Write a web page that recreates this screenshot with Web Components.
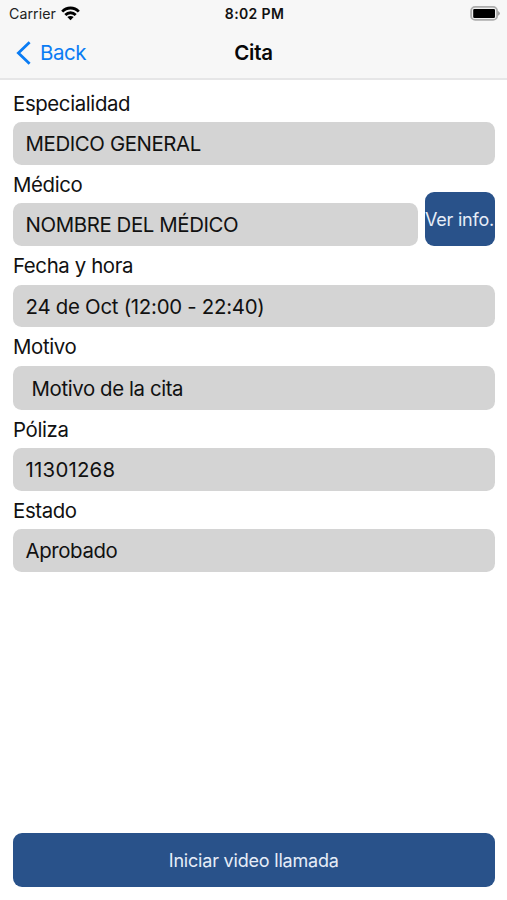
<!DOCTYPE html>
<html lang="es">
<head>
<meta charset="utf-8">
<title>Cita</title>
<style>
html, body { margin: 0; height: 100%; background: #fff; }
body { font-family: Inter, "Liberation Sans", sans-serif; color: #111; overflow: hidden; }
</style>
</head>
<body>
<cita-screen></cita-screen>
<script>
const define = (name, html) => customElements.define(name, class extends HTMLElement {
  constructor() {
    super();
    this.attachShadow({ mode: 'open' }).innerHTML = html;
  }
});

define('status-bar', `
<style>
:host { display: grid; grid-template-columns: 1fr auto 1fr; align-items: center; height: 27px; padding: 0 7px 0 9px; font-size: 14.2px; color: #222; }
.left { display: flex; align-items: center; gap: 5px; letter-spacing: 0.05px; }
.time { font-weight: 600; font-size: 14px; letter-spacing: 0.35px; color: #111; }
.right { display: flex; justify-content: flex-end; }
svg { display: block; }
</style>
<div class="left"><span>Carrier</span>
<svg width="19" height="15" viewBox="0 0 19 15" fill="none" stroke="#000" stroke-width="2.8"><path d="M1.2 5.6C5.8 .8 13.2 .8 17.8 5.6"/><path d="M4.3 9C7.3 6 11.7 6 14.7 9"/><path d="M9.5 14.2L6.3 11C8.2 9.6 10.8 9.6 12.7 11Z" fill="#000" stroke="none"/></svg></div>
<span class="time">8:02 PM</span>
<div class="right"><svg width="30" height="15" viewBox="0 0 30 15"><rect x="1.1" y=".9" width="26" height="13" rx="4" fill="#f0f0f0" stroke="#adadad" stroke-width="1.8"/><path d="M28.2 5.4L30 7.4L28.2 9.4Z" fill="#999" stroke="#999" stroke-width=".6"/><rect x="3.2" y="2.9" width="21.8" height="9" rx="1.2" fill="#000"/></svg></div>`);

define('nav-bar', `
<style>
:host { display: grid; grid-template-columns: 1fr auto 1fr; align-items: center; height: 51px; padding: 0 16px; font-size: 20.5px; border-bottom: 2px solid #e6e6e7; }
.back { display: flex; align-items: center; gap: 9px; color: #0a7cf4; letter-spacing: -0.45px; }
.title { font-weight: 600; color: #080808; letter-spacing: -0.3px; }
svg { display: block; }
</style>
<div class="back"><svg width="15" height="24" viewBox="0 0 15 24" fill="none" stroke="currentColor" stroke-width="2.8"><path d="M13.6 1.3L2.4 12L13.6 22.7"/></svg><span>Back</span></div>
<span class="title"><slot></slot></span>`);

define('form-field', `
<style>
:host { display: flex; flex-direction: column; min-width: 0; font-size: 20.4px; white-space: nowrap; }
.label { height: 36.4px; line-height: 36px; }
.value { box-sizing: border-box; height: var(--value-height, 42.6px); padding-left: var(--indent, 12.6px); border-radius: 8.5px; background: #d4d4d4; line-height: calc(var(--value-height, 42.6px) + 1px); }
.value span { letter-spacing: var(--value-spacing, -0.4px); }
.label span { letter-spacing: -0.38px; }
</style>
<div class="label"><span><slot name="label"></slot></span></div><div class="value"><span><slot></slot></span></div>`);

define('app-button', `
<style>
:host { display: block; }
button { display: flex; align-items: center; justify-content: center; width: 100%; height: 54px; margin: 0; padding: 0; border: 0; border-radius: 9px; background: #29528a; color: #e6edf8; font: inherit; font-size: 18px; letter-spacing: -0.2px; white-space: nowrap; }
</style>
<button><slot></slot></button>`);

define('cita-screen', `
<style>
:host { display: flex; flex-direction: column; height: 900px; width: 507px; }
header { background: #f7f7f7; }
main { flex: 1; display: flex; flex-direction: column; gap: 2.1px; padding: 6px 12.5px 0 13px; }
.row { display: grid; grid-template-columns: 404.5px 70px; justify-content: space-between; align-items: end; }
footer { padding: 0 12.5px 13px 13px; }
</style>
<header><status-bar></status-bar><nav-bar>Cita</nav-bar></header>
<main>
<form-field><span slot="label">Especialidad</span>MEDICO GENERAL</form-field>
<div class="row"><form-field><span slot="label">Médico</span>NOMBRE DEL MÉDICO</form-field><app-button>Ver info.</app-button></div>
<form-field style="--value-spacing:-0.27px"><span slot="label">Fecha y hora</span>24 de Oct (12:00 - 22:40)</form-field>
<form-field style="--value-height:44px;--indent:18.6px"><span slot="label">Motivo</span>Motivo de la cita</form-field>
<form-field style="--value-spacing:0.2px"><span slot="label">Póliza</span>11301268</form-field>
<form-field><span slot="label">Estado</span>Aprobado</form-field>
</main>
<footer><app-button>Iniciar video llamada</app-button></footer>`);
</script>
</body>
</html>
